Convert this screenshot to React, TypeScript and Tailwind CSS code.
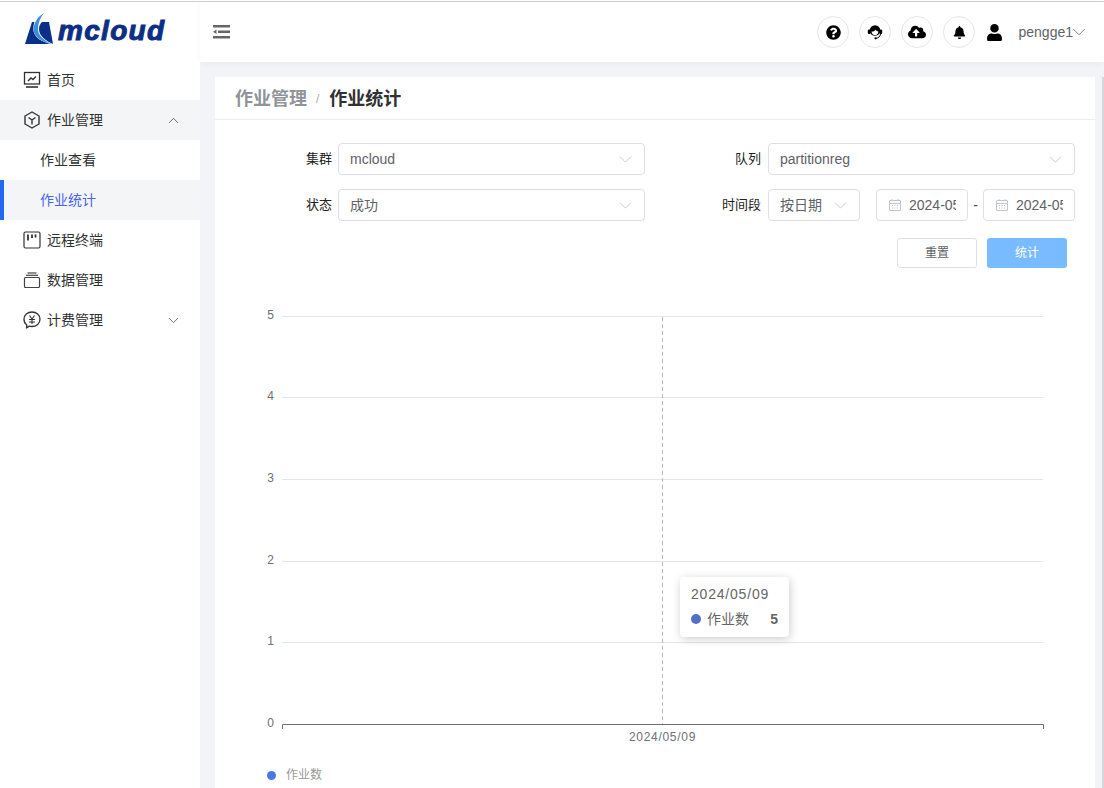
import React from 'react'
import { ChevronDown, ChevronUp } from 'lucide-react'
import { FaQuestionCircle, FaCloudUploadAlt, FaBell, FaUser } from 'react-icons/fa'

const SelectBox = ({ value, className }: { value: string; className: string }) => (
    <div className={`flex items-center justify-between h-8 pl-[11px] pr-[8px] bg-white border border-[#dcdfe6] rounded-[4px] text-sm text-[#606266] ${className}`}>
        <span>{value}</span>
        <ChevronDown size={21} strokeWidth={1} className="text-[#c0c4cc]" />
    </div>
)

const CalendarIcon = () => (
    <svg width="14" height="14" viewBox="0 0 14 14" fill="none" stroke="#c0c4cc" strokeWidth="1" className="shrink-0">
        <rect x="1.5" y="2.5" width="11" height="10" rx="0.5" />
        <path d="M1.5 5.5h11M4 1v2M10 1v2M4 7.5h1M6.5 7.5h1M9 7.5h1M4 10h1M6.5 10h1M9 10h1" />
    </svg>
)

const DateBox = () => (
    <div className="flex items-center w-[92px] h-8 pl-[11px] pr-[11px] bg-white border border-[#dcdfe6] rounded-[4px] text-sm text-[#606266] overflow-hidden">
        <CalendarIcon />
        <span className="ml-[7px] w-[48px] overflow-hidden whitespace-nowrap">2024-05-09</span>
    </div>
)

const HeaderBtn = ({ children }: { children: React.ReactNode }) => (
    <div className="flex items-center justify-center w-8 h-8 rounded-full border border-[#e6e6e6] bg-white text-black">
        {children}
    </div>
)

const HomeIcon = () => (
    <svg width="18" height="18" viewBox="0 0 18 18" fill="none" stroke="#333" strokeWidth="1.3">
        <rect x="1.5" y="1.5" width="15" height="11.5" />
        <path d="M5 10l3-3 2 1.5 3-3" strokeWidth="1.500" />
        <path d="M3 16h12" strokeWidth="1.600" />
    </svg>
)
const BoxIcon = () => (
    <svg width="18" height="18" viewBox="0 0 18 18" fill="none" stroke="#333" strokeWidth="1.4">
        <path d="M9 1l7 4v8l-7 4-7-4V5z" strokeLinejoin="round" />
        <path d="M5.5 6.5L9 9l3.500-2.500M9 9v4.500" />
    </svg>
)
const TermIcon = () => (
    <svg width="18" height="18" viewBox="0 0 18 18" fill="none" stroke="#333" strokeWidth="1.2">
        <rect x="1" y="1" width="16" height="16" rx="1.500" />
        <path d="M5 3.500v6M9 3.500v3.500M12.500 3.500v3" strokeWidth="1.800" />
    </svg>
)
const DataIcon = () => (
    <svg width="18" height="18" viewBox="0 0 18 18" fill="none" stroke="#444" strokeWidth="1.2">
        <rect x="1.500" y="6.500" width="15" height="10" rx="1" />
        <path d="M3 4.300h12" />
        <path d="M4.500 2h9" />
    </svg>
)
const FeeIcon = () => (
    <svg width="18" height="18" viewBox="0 0 18 18" fill="none" stroke="#333" strokeWidth="1.3">
        <path d="M9 1c4.500 0 8 3 8 7.200s-3.500 7.300-8 7.300c-1 0-2-.2-2.800-.4L3.500 17l.3-3C2 12.700 1 10.600 1 8.200 1 4 4.500 1 9 1z" strokeLinejoin="round" />
        <path d="M6.500 4.500L9 8l2.500-3.500M6 8.500h6M6 11h6M9 8v5" strokeWidth="1.100" />
    </svg>
)
const HeadsetIcon = () => (
    <svg width="16" height="16" viewBox="0 0 16 16">
        <circle cx="8" cy="6.500" r="5.300" fill="#000" />
        <rect x="0.800" y="5.500" width="2.800" height="4.500" rx="1.200" fill="#000" />
        <rect x="12.400" y="5.500" width="2.800" height="4.500" rx="1.200" fill="#000" />
        <path d="M4.500 7.500c1.500.2 3-.4 4-1.800.8 1 1.800 1.600 3 1.800-.2 2.300-1.700 3.800-3.500 3.800S4.700 9.800 4.500 7.500z" fill="#fff" />
        <path d="M13.500 10c-.3 2.500-2 4-4.500 4.300" fill="none" stroke="#000" strokeWidth="1" />
        <circle cx="8.500" cy="14.300" r="1.100" fill="#000" />
    </svg>
)

const Logo = () => (
    <div className="flex items-end h-[58px] pl-[25px] pb-[16px]">
        <svg width="28" height="31" viewBox="0 0 28 31" className="shrink-0">
            <path d="M7 9L0 31H26C17 29 10 25 8.500 18C8 15 8.500 12 9.500 9Z" fill="#0a2f88" />
            <path d="M19 0C12 4 8.500 11 8.500 17C9 24 17 29 27 31C20 28 13 23 13 16C13 10 15 5 19 0Z" fill="#3d8fd8" />
            <path d="M17 9H24L28 31C21 28 14 23 14 16C14 13 15 11 17 9Z" fill="#0a2f88" />
        </svg>
        <span className="ml-[5px] -mb-[1px] text-[28px] leading-[28px] tracking-[1.3px] font-bold italic text-[#0c2f86] [-webkit-text-stroke:1px_#0c2f86]">mcloud</span>
    </div>
)

const MenuItem = ({ icon, label, arrow, active }: { icon: React.ReactNode; label: string; arrow?: 'up' | 'down'; active?: boolean }) => (
    <div className={`flex items-center h-10 pl-[23px] pr-[18px] text-sm text-[#303133] ${active ? 'bg-[#f4f5f7]' : ''}`}>
        <span className="w-[24px] shrink-0">{icon}</span>
        <span className="flex-1">{label}</span>
        {arrow === 'up' && <ChevronUp size={17} strokeWidth={1.1} className="text-[#444]" />}
        {arrow === 'down' && <ChevronDown size={17} strokeWidth={1.1} className="text-[#444]" />}
    </div>
)

const Chart = () => {
    // y轴刻度 0-5
    const rows = [
        { v: 5, y: 26 },
        { v: 4, y: 107 },
        { v: 3, y: 189 },
        { v: 2, y: 271 },
        { v: 1, y: 352 },
    ]
    return (
        <svg width="880" height="470" viewBox="0 0 880 470" className="block">
            {rows.map(r => (
                <g key={r.v}>
                    <line x1="67" x2="828" y1={r.y + 0.5} y2={r.y + 0.5} stroke="#e0e6f1" />
                    <text x="59" y={r.y + 3} textAnchor="end" fontSize="12" fill="#6e7079">{r.v}</text>
                </g>
            ))}
            <text x="59" y="437" textAnchor="end" fontSize="12" fill="#6e7079">0</text>
            <line x1="447.500" x2="447.500" y1="27" y2="434" stroke="#b6b9c4" strokeDasharray="4 3" />
            <path d="M67.500 439V434.500H828.500V439" fill="none" stroke="#6e7079" />
            <text x="447.500" y="451" textAnchor="middle" fontSize="12" letterSpacing="0.7" fill="#6e7079">2024/05/09</text>
        </svg>
    )
}

export default function App() {
    return (
        <div className="h-[788px] overflow-hidden bg-white pt-px [font-family:'Liberation_Sans','Noto_Sans_CJK_SC',sans-serif]">
            <div className="h-px bg-[#cfcfcf]" />
            <div className="flex h-[786px]">
                <aside className="w-[200px] shrink-0 bg-white">
                    <Logo />
                    <MenuItem icon={<HomeIcon />} label="首页" />
                    <MenuItem icon={<BoxIcon />} label="作业管理" arrow="up" active />
                    <div className="flex items-center h-10 pl-10 text-sm text-[#303133]">作业查看</div>
                    <div className="flex items-center h-10 pl-[36px] bg-[#f4f5f7] border-l-4 border-[#2468f2] text-sm text-[#4a63f0]">作业统计</div>
                    <MenuItem icon={<TermIcon />} label="远程终端" />
                    <MenuItem icon={<DataIcon />} label="数据管理" />
                    <MenuItem icon={<FeeIcon />} label="计费管理" arrow="down" />
                </aside>
                <main className="flex-1 min-w-0 flex flex-col bg-[#f3f4f7]">
                    <header className="flex items-center justify-between h-[60px] shrink-0 bg-white pl-[13px] pr-[14px] shadow-[0_2px_6px_rgba(0,0,0,0.04)]">
                        <svg width="17" height="14" viewBox="0 0 17 14" fill="#666">
                            <rect x="0" y="0" width="17" height="2.500" />
                            <rect x="5" y="5.500" width="12" height="2.500" />
                            <rect x="0" y="11" width="17" height="2.500" />
                            <path d="M0 6.800l3.500-2.300v4.600z" />
                        </svg>
                        <div className="flex items-center">
                            <div className="flex items-center gap-[10px]">
                                <HeaderBtn><FaQuestionCircle size={15} /></HeaderBtn>
                                <HeaderBtn><HeadsetIcon /></HeaderBtn>
                                <HeaderBtn><FaCloudUploadAlt size={18} /></HeaderBtn>
                                <HeaderBtn><FaBell size={13} /></HeaderBtn>
                            </div>
                            <FaUser size={17} className="ml-[11px] text-black" />
                            <span className="ml-[15px] text-sm text-[#606266]">pengge1</span>
                            <ChevronDown size={22} strokeWidth={1} className="-ml-[5px] text-[#777]" />
                        </div>
                    </header>
                    <div className="flex flex-1 min-h-0 pt-[15px] pl-[15px]">
                        <div className="w-[880px] h-full shrink-0 bg-white">
                            <div className="flex items-center h-[43px] pl-5 pt-[2px] border-b border-[#ebeef5] text-lg font-bold">
                                <span className="text-[#909399]">作业管理</span>
                                <span className="ml-[9px] mr-[10px] text-xs font-normal text-[#a8aaaf]">/</span>
                                <span className="text-[#303133]">作业统计</span>
                            </div>
                            <div className="flex flex-col gap-[14px] pt-[23px] pl-[91px] pr-5">
                                <div className="flex items-center">
                                    <span className="w-[26px] text-[13px] text-[#222] whitespace-nowrap">集群</span>
                                    <SelectBox value="mcloud" className="ml-[6px] w-[307px]" />
                                    <span className="ml-[90px] w-[26px] text-[13px] text-[#222] whitespace-nowrap">队列</span>
                                    <SelectBox value="partitionreg" className="ml-[7px] w-[307px]" />
                                </div>
                                <div className="flex items-center">
                                    <span className="w-[26px] text-[13px] text-[#222] whitespace-nowrap">状态</span>
                                    <SelectBox value="成功" className="ml-[6px] w-[307px]" />
                                    <span className="ml-[77px] w-[39px] text-[13px] text-[#222] whitespace-nowrap">时间段</span>
                                    <SelectBox value="按日期" className="ml-[7px] w-[92px]" />
                                    <div className="ml-4"><DateBox /></div>
                                    <span className="w-[15px] text-center text-sm text-[#444]">-</span>
                                    <DateBox />
                                </div>
                            </div>
                            <div className="flex justify-end gap-[10px] pt-[17px] pr-7">
                                <div className="flex items-center justify-center w-20 h-[30px] border border-[#dcdfe6] rounded-[3px] bg-white text-xs text-[#606266]">重置</div>
                                <div className="flex items-center justify-center w-20 h-[30px] rounded-[3px] bg-[#79bbff] text-xs text-white">统计</div>
                            </div>
                            <div className="relative mt-[22px]">
                                <Chart />
                                <div className="absolute left-[465px] top-[287px] w-[109px] h-[60px] px-[11px] pt-[8px] bg-white rounded-[4px] shadow-[1px_2px_10px_rgba(0,0,0,0.2)]">
                                    <div className="text-sm leading-[18px] tracking-[0.8px] text-[#666]">2024/05/09</div>
                                    <div className="flex items-center mt-[7px] text-sm leading-[18px] text-[#666]">
                                        <span className="w-[10px] h-[10px] rounded-full bg-[#5470c6]" />
                                        <span className="ml-[6px] flex-1">作业数</span>
                                        <span className="font-bold">5</span>
                                    </div>
                                </div>
                                <div className="flex items-center pl-[52px] mt-[7px] text-xs text-[#999]">
                                    <span className="w-[9px] h-[9px] rounded-full bg-[#4a77e8]" />
                                    <span className="ml-[10px]">作业数</span>
                                </div>
                            </div>
                        </div>
                        <div className="w-[7px] shrink-0" />
                        <div className="w-[2px] shrink-0 bg-[#d8d8dc]" />
                    </div>
                </main>
            </div>
        </div>
    )
}
